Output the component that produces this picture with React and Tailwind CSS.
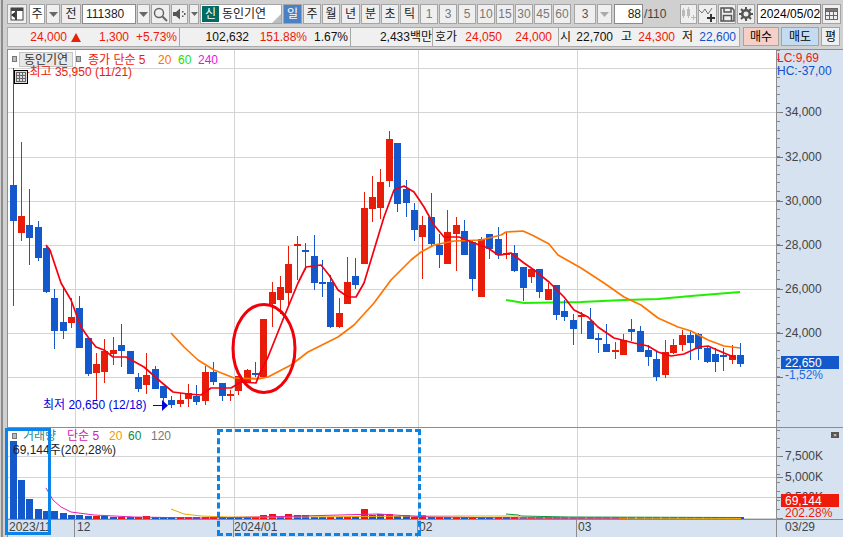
import React from "react";

const C = [
[12.5,68,306,185,221,"b"],[20.5,142,241,216,233,"r"],[28.5,189,265,225,238,"b"],[37.5,221,261,227,258,"b"],[45.5,245,293,248,292,"b"],[53.5,289,349,298,331,"b"],[62.5,287,339,322,331,"b"],[70.5,298,328,317,323,"r"],[78.5,296,348,308,348,"b"],[87.5,338,376,338,374,"b"],
[95.5,353,400,364,373,"r"],[103.5,339,383,351,372,"r"],[112.5,337,365,350,354,"r"],[120.5,324,367,345,351,"b"],[129.5,351,374,351,374,"b"],[137.5,373,392,377,389,"b"],[145.5,353,394,375,385,"r"],[154.5,366,389,369,389,"b"],[162.5,386,402,386,398,"b"],[170.5,396,408,400,405,"b"],
[179.5,393,407,400,404,"r"],[187.5,384,407,393,399,"r"],[195.5,385,405,396,402,"b"],[204.5,366,405,372,401,"r"],[212.5,362,385,372,382,"b"],[221.5,383,401,383,396,"b"],[229.5,390,401,394,396,"r"],[237.5,376,395,376,391,"r"],[246.5,369,382,370,382,"r"],[254.5,362,377,373,375,"b"],
[262.5,319,377,319,377,"r"],[271.5,282,327,292,304,"r"],[279.5,276,314,287,300,"r"],[287.5,246,305,264,293,"r"],[296.5,236,280,244,246,"r"],[304.5,243,270,250,251,"b"],[313.5,235,290,256,283,"b"],[321.5,260,297,282,283,"b"],[329.5,275,328,282,327,"b"],[338.5,298,328,313,327,"r"],
[346.5,257,304,282,304,"r"],[354.5,258,289,276,285,"b"],[363.5,192,264,208,264,"r"],[371.5,176,222,197,209,"r"],[379.5,169,219,182,208,"r"],[388.5,131,187,139,181,"r"],[396.5,143,212,143,204,"b"],[405.5,180,217,189,203,"b"],[413.5,203,241,210,230,"b"],[421.5,216,279,225,237,"r"],
[430.5,193,247,217,244,"b"],[438.5,234,268,245,255,"b"],[446.5,210,264,232,264,"r"],[455.5,217,271,225,234,"r"],[463.5,220,255,231,255,"b"],[471.5,241,291,242,279,"b"],[480.5,237,297,239,297,"r"],[488.5,234,259,234,249,"b"],[497.5,227,259,239,255,"b"],[505.5,232,259,253,255,"r"],
[513.5,245,272,253,271,"b"],[522.5,267,301,267,288,"b"],[530.5,269,283,269,277,"r"],[538.5,269,298,269,292,"b"],[547.5,283,300,289,300,"r"],[555.5,285,320,285,315,"b"],[563.5,300,321,311,317,"b"],[572.5,314,345,320,329,"b"],[580.5,312,334,315,316,"r"],[589.5,308,339,321,339,"b"],
[597.5,333,353,338,340,"b"],[605.5,324,352,344,352,"b"],[614.5,342,359,350,352,"r"],[622.5,334,355,340,355,"r"],[630.5,319,341,329,332,"b"],[639.5,326,352,331,352,"b"],[647.5,345,366,350,357,"b"],[655.5,351,381,359,377,"b"],[664.5,340,378,352,375,"r"],[672.5,339,354,345,353,"r"],
[681.5,330,351,335,345,"r"],[689.5,331,360,335,343,"b"],[697.5,333,360,334,349,"b"],[706.5,347,363,348,362,"b"],[714.5,348,372,354,362,"b"],[722.5,348,371,355,357,"b"],[731.5,345,364,355,360,"r"],[739.5,343,367,355,364,"b"],
];
const RED = "#e71d0a", BLUE = "#1359cb";
const MA5 = "45,245 49,250 60,283 70,300 80,327 87,337 95,347 103,350 112,357 125,357 143,367 160,382 172,392 187,394 200,395 210,388 230,388 240,382 255,383 258,375 267,357 283,317 297,283 305,267 320,265 328,275 337,290 347,297 355,297 363,283 373,250 383,217 393,190 403,186 413,192 423,207 433,225 443,237 458,237 473,243 487,248 497,255 500,255 510,253 523,263 533,270 548,282 563,297 573,310 587,317 597,327 613,338 633,343 647,346 657,352 670,356 683,354 698,347 707,346 723,353 735,358";
const MA20 = "170,333 183,347 197,360 213,370 233,378 257,379 267,377 290,365 307,352 337,337 353,325 373,303 390,280 410,260 420,252 433,245 453,241 480,240 500,235 505,232 522,231 533,236 548,244 557,255 580,268 603,283 623,297 640,305 657,318 677,327 690,331 707,340 723,346 739,348";
const MA60 = "505,300 523,303 580,302 623,300 657,299 690,296 739,292";
const TOPS = {0:441,1:480,2:499,3:509,4:511,5:511,6:513,7:515,8:515,9:516,10:516,11:516,16:516,30:515,31:514,33:514,34:515,35:515,42:509,43:515,44:514,45:514,46:516,47:515,49:515};
const VC = "bbbbbbbbbbrbbrbrrbbbrrbrrbbbbrrrbrbbbbrbrbrbbrbbrrbrbrbrbbrbrbrbrbbbbbbbbrbbbbbbbbbbbbr";

const font = "font-['Liberation_Sans','Noto_Sans_CJK_KR',sans-serif]";

function Btn({ className = "", bg = "bg-[#efefef]", border = "border-[#a4a4a4]", children }) {
  return <div className={`flex h-[20px] shrink-0 items-center justify-center border ${border} ${bg} ${className}`}>{children}</div>;
}
function Caret({ w }) {
  return <Btn className={w}><svg width="9" height="5"><path d="M0 0h9L4.500 5z" fill="#666" /></svg></Btn>;
}
function Plot({ x, y, w, h, children, className = "" }) {
  return <svg className={`block ${className}`} width={w} height={h} viewBox={`${x} ${y} ${w} ${h}`}>{children}</svg>;
}
const Line = ({ pts, c, w = 1.7 }) => <polyline points={pts} fill="none" stroke={c} strokeWidth={w} strokeLinejoin="round" />;

function Ticks({ top, bottom, major }) {
  const out = [];
  major.forEach((y) => out.push(<line key={"m" + y} x1="775" x2="781" y1={y + 0.5} y2={y + 0.5} stroke="#777" />));
  for (let y = major[0] % 8.8; y < bottom; y += 8.8) {
    if (y > top) out.push(<line key={y} x1="775" x2="778" y1={Math.round(y) + 0.5} y2={Math.round(y) + 0.5} stroke="#888" />);
  }
  return out;
}

export default function App() {
  return (
    <div className={`relative flex h-[537px] w-[843px] overflow-hidden bg-[#d0d0d0] text-[12px] leading-[14px] ${font}`}>
      <div className="ml-px w-[6px] shrink-0 border-l-2 border-[#8c8c8c]" />
      <div className="flex w-[836px] flex-col">
        {/* toolbar */}
        <div className="flex h-[27px] items-start gap-px pt-[4px] text-[#222]">
          <Btn className="w-[20px]">
            <svg width="14" height="14" viewBox="0 0 14 14"><rect x="1" y="1" width="12" height="12" fill="#fff" stroke="#444" /><rect x="1" y="1" width="12" height="3" fill="#444" /><rect x="5" y="4" width="2" height="9" fill="#444" /><path d="M5 5v6L1 8z" fill="#333" /></svg>
          </Btn>
          <Btn className="ml-px w-[16px]" bg="bg-white">주</Btn>
          <Caret w="w-[14px]" />
          <Btn className="w-[20px]">전</Btn>
          <Btn className="w-[54px] justify-start pl-[3px]" bg="bg-white" border="border-[#8a8a8a]">111380</Btn>
          <Caret w="w-[13px]" />
          <Btn className="w-[19px]">
            <svg width="15" height="15" viewBox="0 0 15 15" fill="none" stroke="#666" strokeWidth="1.5"><circle cx="6" cy="6" r="4.500" /><path d="M9.500 9.500l4.500 4.500" strokeWidth="2" /></svg>
          </Btn>
          <Btn className="w-[17px]">
            <svg width="13" height="12" viewBox="0 0 13 12" fill="#555"><path d="M0 4h3l4-3.500v11L3 8H0z" /><rect x="9" y="3" width="1.500" height="1.500" /><rect x="9" y="7.500" width="1.500" height="1.500" /><rect x="11" y="5" width="1.500" height="2" /></svg>
          </Btn>
          <Btn className="w-[10px]"><svg width="7" height="4"><path d="M0 0h7L3.500 4z" fill="#666" /></svg></Btn>
          <div className="relative flex h-[20px] w-[82px] shrink-0 items-center border border-[#a4a4a4] bg-white">
            <span className="ml-px flex h-[16px] w-[17px] items-center justify-center bg-[#006b62] text-white">신</span>
            <span className="ml-[3px]">동인기연</span>
            <svg className="absolute bottom-0 right-0" width="9" height="9"><path d="M9 0v9H0z" fill="#bdbdbd" /></svg>
          </div>
          <Btn className="w-[19px] text-white" bg="bg-[#4a81c4]">일</Btn>
          <Btn className="w-[18px]">주</Btn>
          <Btn className="w-[18px]">월</Btn>
          <Btn className="w-[19px]">년</Btn>
          <Btn className="w-[19px]">분</Btn>
          <Btn className="w-[18px]">초</Btn>
          <Btn className="w-[19px]">틱</Btn>
          {["1", "3", "5", "10", "15", "30", "45", "60"].map((t) => (
            <Btn key={t} className="w-[18px] text-[#777]">{t}</Btn>
          ))}
          <Btn className="ml-[2px] w-[22px] text-[#555]">3</Btn>
          <Btn className="w-[15px]"><svg width="9" height="5"><path d="M0 0h9L4.500 5z" fill="#aaa" /></svg></Btn>
          <Btn className="ml-px w-[29px] justify-end pr-px" bg="bg-white" border="border-[#8a8a8a]">88</Btn>
          <span className="flex h-[20px] w-[24px] shrink-0 items-center text-[#444]">/110</span>
          <Btn className="ml-[11px] w-[17px]">
            <svg width="15" height="15" viewBox="0 0 15 15" fill="#bbb"><rect x="1" y="3" width="3" height="6" /><rect x="2" y="1" width="1" height="10" /><rect x="6" y="2" width="3" height="7" /><rect x="7" y="0" width="1" height="11" /><path d="M10 10h2V8h1v2h2v1h-2v2h-1v-2h-2z" /></svg>
          </Btn>
          <Btn className="w-[19px]">
            <svg width="17" height="15" viewBox="0 0 17 15" fill="none" stroke="#555"><path d="M0 3l3 3 3-4 3 5 4-6" strokeWidth="0.8" /><path d="M8 11h8M12 7v8" strokeWidth="2" stroke="#333" /></svg>
          </Btn>
          <Btn className="w-[18px]">
            <svg width="15" height="15" viewBox="0 0 15 15" fill="none" stroke="#555" strokeWidth="1.500"><path d="M1 1h11l2 2v11H1z" /><path d="M4 1v4h7V1M3.500 14V8.500h8V14" /></svg>
          </Btn>
          <Btn className="w-[18px]">
            <svg width="14" height="14" viewBox="0 0 14 14"><circle cx="7" cy="7" r="3.800" fill="none" stroke="#555" strokeWidth="2.600" /><path d="M7 0v3M7 11v3M0 7h3M11 7h3M2 2l2 2M10 10l2 2M12 2l-2 2M4 10l-2 2" stroke="#555" strokeWidth="2" /></svg>
          </Btn>
          <Btn className="ml-px w-[64px] justify-start pl-[2px] text-black" bg="bg-white" border="border-[#8a8a8a]">2024/05/02</Btn>
          <Btn className="w-[19px]">
            <svg width="13" height="12" viewBox="0 0 13 12" fill="none" stroke="#666"><rect x="0.500" y="0.500" width="12" height="11" /><rect x="0.500" y="0.500" width="12" height="3" fill="#777" /><path d="M4.500 4v7M8.500 4v7M1 7.500h11" /></svg>
          </Btn>
        </div>

        {/* info row */}
        <div className="flex h-[22px] items-start">
          <div className="flex h-[20px] w-[733px] items-center divide-x divide-[#a8a8a8] border border-[#ababab] bg-[#f0f0f0]">
            <div className="flex h-full w-[172px] items-center text-[#ee1a0a]">
              <span className="w-[59px] text-right">24,000</span>
              <svg className="ml-[4px]" width="10" height="9"><path d="M5 0l5 9H0z" fill="#e8200c" /></svg>
              <span className="w-[48px] text-right">1,300</span>
              <span className="w-[48px] text-right">+5.73%</span>
            </div>
            <div className="flex h-full w-[171px] items-center">
              <span className="w-[69px] text-right text-[#111]">102,632</span>
              <span className="w-[58px] text-right text-[#ee1a0a]">151.88%</span>
              <span className="w-[41px] text-right text-[#111]">1.67%</span>
            </div>
            <div className="flex h-full w-[82px] items-center justify-end whitespace-nowrap text-[#111]">2,433백만</div>
            <div className="flex h-full w-[126px] items-center">
              <span className="ml-[2px] w-[25px] text-[#111]">호가</span>
              <span className="w-[42px] text-right text-[#ee1a0a]">24,050</span>
              <span className="w-[50px] text-right text-[#ee1a0a]">24,000</span>
            </div>
            <div className="flex h-full flex-1 items-center">
              <span className="ml-px w-[12px] text-[#111]">시</span>
              <span className="w-[41px] text-right text-[#111]">22,700</span>
              <span className="ml-[8px] w-[12px] text-[#111]">고</span>
              <span className="w-[42px] text-right text-[#ee1a0a]">24,300</span>
              <span className="ml-[7px] w-[12px] text-[#111]">저</span>
              <span className="w-[42px] text-right text-[#1050cc]">22,600</span>
            </div>
          </div>
          <div className="ml-[3px] flex h-[19px] w-[36px] items-center justify-center border border-[#a4a4a4] bg-[#f5d0c8]">매수</div>
          <div className="ml-[2px] flex h-[19px] w-[38px] items-center justify-center border border-[#a4a4a4] bg-[#c4dcf2]">매도</div>
          <div className="ml-[2px] flex h-[19px] w-[19px] items-center justify-center border border-[#a4a4a4] bg-[#efefef]">평</div>
        </div>

        {/* price panel */}
        <div className="flex h-[378px] border-t border-l border-[#8c8c8c]">
          <div className="relative w-[768px] bg-white">
            <Plot x={7} y={50} w={768} h={377}>
              {[68, 112, 157, 201, 245, 289, 333, 377].map((y) => <line key={y} x1="7" x2="775" y1={y + 0.5} y2={y + 0.5} stroke="#d4d4d4" />)}
              {[74.5, 233.5, 417.5, 576.5].map((x) => <line key={x} x1={x} x2={x} y1="50" y2="427" stroke="#d4d4d4" />)}
              <Line pts={MA60} c="#22ee00" w={2} />
              {C.map(([x, wt, wb, bt, bb, c]) => (
                <g key={x} fill={c === "r" ? RED : BLUE}>
                  <rect x={x - 0.5} y={wt} width="1" height={wb - wt} />
                  <rect x={x - 3.5} y={bt} width="7" height={Math.max(bb - bt, 2)} />
                </g>
              ))}
              <Line pts={MA20} c="#ff7400" />
              <Line pts={MA5} c="#f40010" />
              <ellipse cx="263" cy="348.500" rx="31" ry="44" fill="none" stroke="#f20008" strokeWidth="3" />
              <path d="M152 405.500h10" stroke="#0000e0" />
              <path d="M161 400l6 5.500-6 5.500z" fill="#0000e0" />
            </Plot>
            <div className="absolute left-[4px] top-[6px] h-[6px] w-[5px] border border-[#777] bg-[#bbb]" />
            <div className="absolute left-[11px] top-[2px] flex h-[15px] w-[54px] items-center justify-center border border-[#c4c4c4] bg-[#e8e8e8] text-[#333]">동인기연</div>
            <div className="absolute left-[68px] top-[6px] h-[6px] w-[5px] border border-[#777] bg-[#bbb]" />
            <div className="absolute left-[80px] top-[2px] flex h-[15px] items-center whitespace-nowrap">
              <span className="w-[70px] text-[#ee1a0a]">종가 단순 5</span>
              <span className="w-[20px] text-[#ff7000]">20</span>
              <span className="w-[20px] text-[#22e000]">60</span>
              <span className="text-[#f010e0]">240</span>
            </div>
            <span className="absolute left-[13px] top-[15px] whitespace-nowrap text-[#ee1a0a]">─최고 35,950 (11/21)</span>
            <div className="absolute left-[6px] top-[20px] h-[14px] w-[14px] border border-black bg-[#ddd] p-px">
              <svg className="block" width="10" height="10" viewBox="0 0 10 10" fill="none" stroke="#666"><rect x="0.500" y="0.500" width="9" height="9" /><path d="M3.500 0v10M6.500 0v10M0 3.500h10M0 6.500h10" /></svg>
            </div>
            <span className="absolute left-[35px] top-[348px] whitespace-nowrap text-[#0000e0]">최저 20,650 (12/18)</span>
          </div>
          <div className="relative w-[68px] border-l border-[#8c8c8c] bg-[#d6e2f0] text-[#444]">
            <Plot x={775} y={50} w={67} h={377} className="absolute left-0 top-0">
              <Ticks top={50} bottom={427} major={[112, 157, 201, 245, 289, 333, 377]} />
            </Plot>
            <span className="absolute left-0 top-[1px] text-[#ee1a0a]">LC:9,69</span>
            <span className="absolute left-0 top-[14px] whitespace-nowrap text-[#1050cc]">HC:-37,00</span>
            <span className="absolute left-[8px] top-[55px]">34,000</span>
            <span className="absolute left-[8px] top-[100px]">32,000</span>
            <span className="absolute left-[8px] top-[144px]">30,000</span>
            <span className="absolute left-[8px] top-[188px]">28,000</span>
            <span className="absolute left-[8px] top-[232px]">26,000</span>
            <span className="absolute left-[8px] top-[276px]">24,000</span>
            <span className="absolute left-[8px] top-[318px] text-[#1a6ae0]">-1,52%</span>
            <div className="absolute left-[4px] top-[306px] flex h-[13px] w-[58px] items-center bg-[#1359cb] pl-[4px] text-white">22,650</div>
          </div>
        </div>

        {/* volume panel */}
        <div className="flex h-[92px] border-t border-l border-[#8c8c8c]">
          <div className="relative w-[768px] bg-white">
            <Plot x={7} y={428} w={768} h={91}>
              {[456, 477, 497, 518].map((y) => <line key={y} x1="7" x2="775" y1={y + 0.5} y2={y + 0.5} stroke="#d4d4d4" />)}
              {[74.5, 233.5, 417.5, 576.5].map((x) => <line key={x} x1={x} x2={x} y1="428" y2="520" stroke="#d4d4d4" />)}
              {C.map(([x], i) => {
                const t = TOPS[i] || 517;
                return <rect key={x} x={x - 3.5} y={t} width="7" height={519 - t} fill={VC[i] === "r" ? "#ee1410" : BLUE} />;
              })}
              <Line pts="505,514 517,515 520,516 568,517 740,517.500" c="#109040" w={1} />
              <Line pts="170,509 183,514 200,516 227,517 300,517 420,516 517,516 520,518 568,518 740,518.500" c="#eca800" w={1} />
              <Line pts="45,488 52,500 60,507 70,512 93,515 133,517 200,518 260,517 300,516 377,514 410,516 430,517 520,518 619,518" c="#e020b0" w={1} />
            </Plot>
            <div className="absolute left-[4px] top-[5px] h-[6px] w-[5px] border border-[#777] bg-[#bbb]" />
            <div className="absolute left-[15px] top-[1px] flex items-center whitespace-nowrap">
              <span className="w-[44px] text-[#2a8c8c]">거래량</span>
              <span className="w-[42px] text-[#d020b0]">단순 5</span>
              <span className="w-[19px] text-[#e8a000]">20</span>
              <span className="w-[23px] text-[#108840]">60</span>
              <span className="text-[#777]">120</span>
            </div>
            <span className="absolute left-[5px] top-[15px] whitespace-nowrap text-[#222]">69,144주(202,28%)</span>
          </div>
          <div className="relative w-[68px] border-l border-[#8c8c8c] bg-[#d6e2f0] text-[#444]">
            <Plot x={775} y={428} w={67} h={91} className="absolute left-0 top-0">
              <Ticks top={428} bottom={519} major={[456, 477, 497, 518]} />
            </Plot>
            <div className="absolute left-[54px] top-[4px] flex h-[6px] w-[8px] items-center justify-center bg-[#555] text-[6px] leading-none text-white">×</div>
            <span className="absolute left-[8px] top-[21px]">7,500K</span>
            <span className="absolute left-[8px] top-[42px]">5,000K</span>
            <span className="absolute left-[8px] top-[62px]">2,500K</span>
            <div className="absolute left-[4px] top-[66px] flex h-[13px] w-[58px] items-center bg-[#ee1a0a] pl-[4px] text-white">69,144</div>
            <span className="absolute left-[8px] top-[78px] text-[#ee1a0a]">202.28%</span>
          </div>
        </div>

        {/* date axis */}
        <div className="flex flex-1 border-t border-l border-[#8c8c8c] bg-[#d6e2f0] text-[#444]">
          <div className="flex w-[768px]">
            <span className="w-[66px] pl-[1px]">2023/11</span>
            <span className="w-[159px] border-l border-[#8c8c8c] pl-[2px]">12</span>
            <span className="w-[184px] border-l border-[#8c8c8c]">2024/01</span>
            <span className="w-[159px] border-l border-[#8c8c8c] pl-[1px]">02</span>
            <span className="flex-1 border-l border-[#8c8c8c] pl-px">03</span>
          </div>
          <span className="flex-1 border-l border-[#8c8c8c] pl-[8px]">03/29</span>
        </div>
      </div>

      {/* annotation frames drawn over the lower panel */}
      <div className="absolute left-[5px] top-[428px] h-[107px] w-[46px] border-[3px] border-[#0a84e8]" />
      <div className="absolute left-[217px] top-[429px] h-[107px] w-[204px] border-[3px] border-dashed border-[#0a84e8]" />
    </div>
  );
}
